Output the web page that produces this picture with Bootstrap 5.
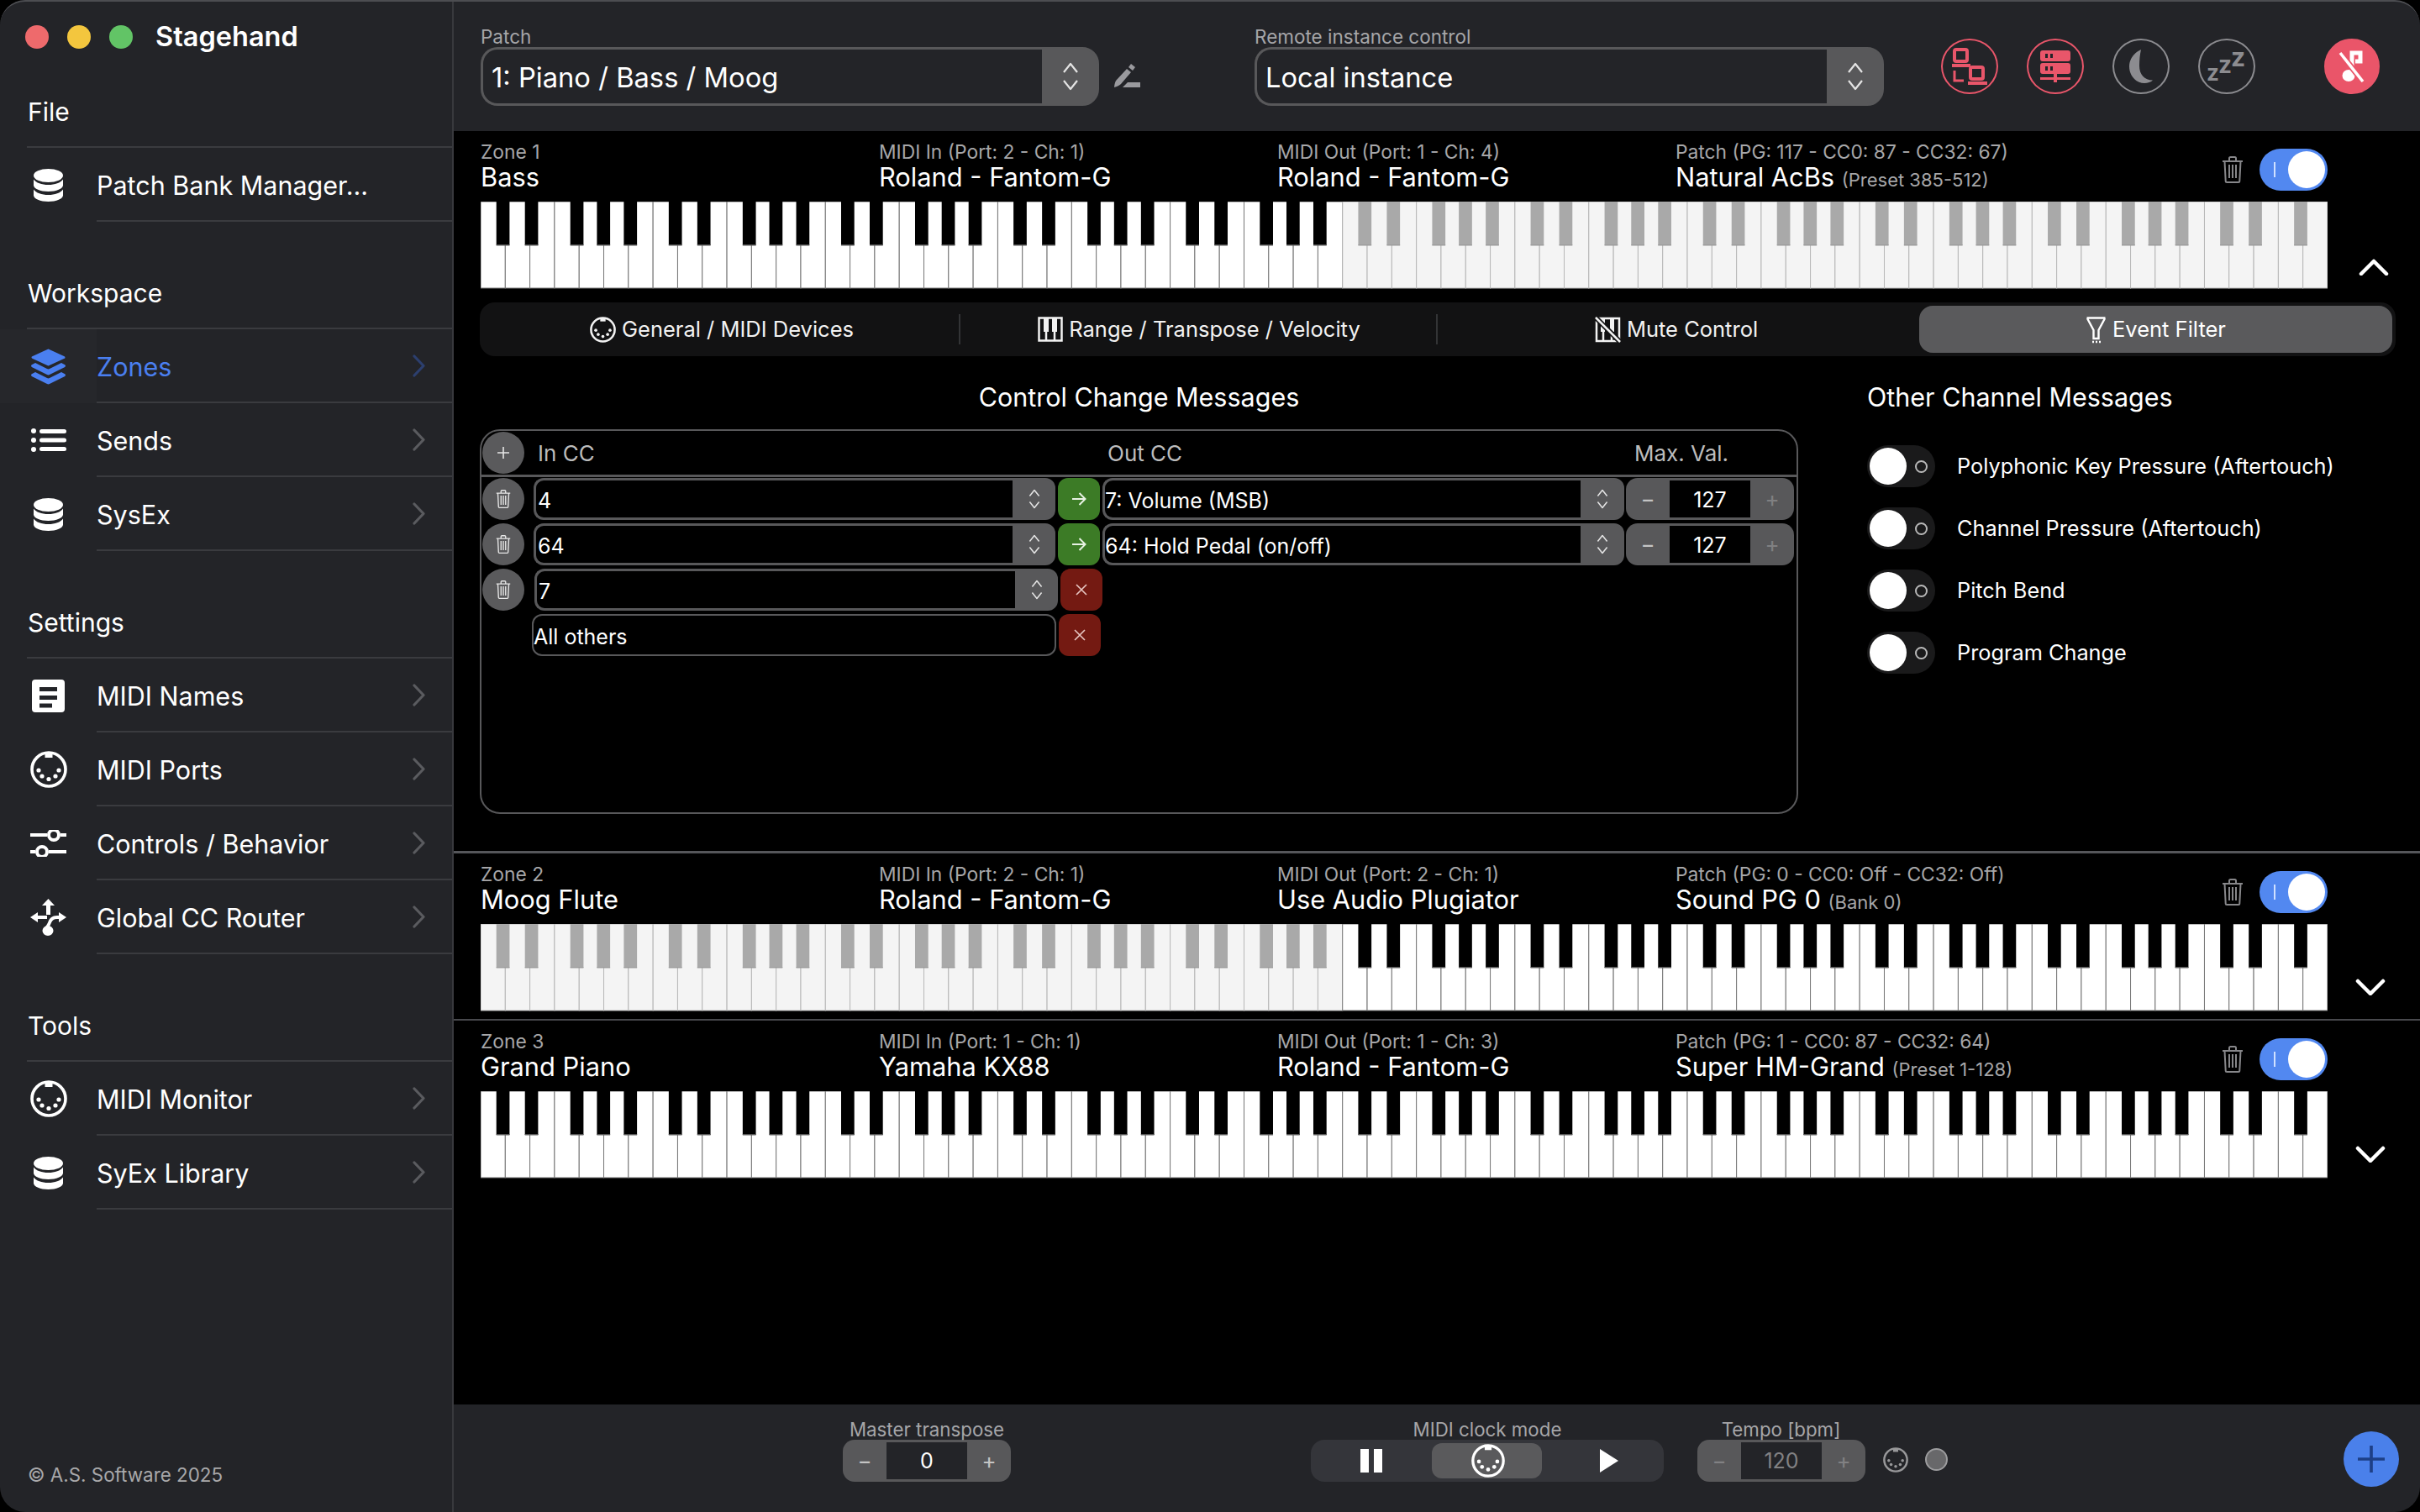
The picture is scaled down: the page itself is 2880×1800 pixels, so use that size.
<!DOCTYPE html>
<html lang="en">
<head>
  <meta charset="UTF-8" />
  <meta name="viewport" content="width=device-width, initial-scale=1" />
  <title>Stagehand</title>
  <link href="https://cdn.jsdelivr.net/npm/bootstrap@5.3.0/dist/css/bootstrap.min.css" rel="stylesheet" />
  <style>
    html, body { background: #000; height: 100%; }
    body { font-family: "Inter", "Liberation Sans", sans-serif; color: #fff; overflow: hidden; }
    svg { display: block; flex-shrink: 0; }

    .app-win { position: relative; width: 2880px; height: 1800px; border-radius: 30px; overflow: hidden; background: #000; }
    .app-win::after { content: ""; position: absolute; inset: 0; border-top: 2px solid #4c4d51; border-radius: 30px; pointer-events: none; }

    /* sidebar */
    .side { width: 540px; background: #232428; border-right: 2px solid #38393d; flex-shrink: 0; }
    .side-title { height: 88px; padding-left: 30px; gap: 22px; }
    .light { width: 28px; height: 28px; border-radius: 50%; }
    .app-name { font-size: 32.5px; font-weight: 600; margin-left: 5px; }
    .sec-head { height: 88px; margin-left: 32px; padding-left: 1px; padding-top: 4px; font-size: 30px; border-bottom: 2px solid #3a3b3f; }
    .sec-gap { margin-top: 40px; }
    .side-list { --bs-list-group-bg: transparent; --bs-list-group-border-width: 0; --bs-list-group-color: #fff; --bs-list-group-item-padding-x: 0; --bs-list-group-item-padding-y: 0; border-radius: 0; }
    .side-row { height: 88px; font-size: 30.5px; }
    .side-row.on { background: #26272b; color: #4a7ff0; }
    .side-ico { width: 115px; }
    .side-inner { height: 88px; border-bottom: 2px solid #3a3b3f; padding: 3px 32px 0 0; }
    .side-row.on .side-inner { background: #232428; }
    .chev-r { color: #5a5b5f; margin-top: -3px; }
    .side-row.on .chev-r { color: #2c3f6e; }
    .side-foot { font-size: 22.4px; color: #a8a8aa; padding: 0 0 27px 33px; }

    /* top bar */
    .top-bar { height: 156px; background: #232428; padding: 32px 0 0 32px; flex-shrink: 0; }
    .fld-label { font-size: 22.5px; line-height: 24px; color: #a6a6a8; }
    .pick-big { width: 736px; height: 70px; }
    .pick-big2 { width: 749px; height: 70px; }
    .pick .form-control { background: transparent; border: 3px solid #58585a; border-right: 0; color: #fff; box-shadow: none; display: flex; align-items: center; min-height: 0; }
    .pick .input-group-text { background: #58585a; border: 3px solid #58585a; color: #e4e4e4; justify-content: center; padding: 0; }
    .pick-big .form-control, .pick-big2 .form-control { font-size: 32.7px; padding: 3px 0 0 10px; border-radius: 20px 0 0 20px; }
    .pick-big .input-group-text, .pick-big2 .input-group-text { width: 68px; border-radius: 0 20px 20px 0; }
    .pen-btn { margin: 43px 0 0 17px; color: #9a9a9e; }
    .round-btn { width: 68px; height: 66px; border-radius: 50%; padding: 0; background: transparent; border: 2px solid #e9566a; color: #e9566a; }
    .round-btn.dim { border-color: #8c8c90; color: #8c8c90; }
    .round-btn.fill { width: 66px; background: #ea5569; color: #fff; }
    .zzz-txt { font-family: "Inter", sans-serif; font-weight: 700; fill: currentColor; }
    .zzz-ico { margin-top: -6px; }

    /* zones */
    .zone-line { border-top: 3px solid #55565a; margin-top: 44px; }
    .zone-thin { border-top: 2px solid #48494d; margin-top: 9px; }
    .zone-head { height: 84px; padding-left: 32px; }
    .zone-col { width: 474px; padding-top: 12px; }
    .zone-lab { font-size: 22.8px; line-height: 26px; color: #a6a6a8; }
    .zone-name { font-size: 30.8px; line-height: 34px; color: #fff; white-space: nowrap; }
    .zone-name small { font-size: 22px; color: #a6a6a8; }
    .zone-tools { position: absolute; left: 2104px; top: 21px; gap: 19px; }
    .zone-bar { position: relative; }
    .trash-ico { color: #87878a; }
    .tog { width: 81px; height: 50px; border-radius: 25px; padding: 0 3px; }
    .tog-on { background: #5288f0; justify-content: space-between; padding-left: 17px; }
    .tog-off { background: #1a1a1b; }
    .tog-knob { width: 44px; height: 44px; background: #fff; border-radius: 50%; }
    .tog-i { width: 2px; height: 18px; background: #cfe0ff; }
    .tog-o { width: 15px; height: 15px; border: 2px solid #b8b8b8; border-radius: 50%; margin-left: 10px; }
    .kbd-wrap { padding-left: 32px; }
    .kbd-chev { width: 110px; padding: 0 0 16px 37px; }
    .kbd-chev.dn { padding: 0 0 19px 33px; }

    .tabs-bar { margin: 16px 0 0 31px; width: 2280px; height: 64px; background: #121213; border-radius: 18px; padding: 4px; flex-wrap: nowrap; --bs-nav-pills-border-radius: 16px; --bs-nav-pills-link-active-bg: #5a5a5c; --bs-nav-pills-link-active-color: #fff; }
    .tabs-bar .nav-item { position: relative; }
    .tabs-bar .nav-item + .nav-item:not(:last-child)::before { content: ""; position: absolute; left: -2px; top: 10px; height: 36px; width: 2px; background: #333436; }
    .tabs-bar .nav-link { height: 56px; color: #f2f2f2; font-size: 25.5px; padding: 0; gap: 7px; }
    .tabs-bar .nav-link.active { margin-left: 5px; width: calc(100% - 5px); padding-top: 1px; }

    .cc-title { font-size: 30.5px; line-height: 40px; margin: 29px 0 18px; }
    .panel-l { width: 1569px; margin-left: 31px; }
    .panel-r { margin-left: 82px; }
    .cc-box { height: 458px; border: 2px solid #58585a; border-radius: 24px; padding: 0 0 0 1px; }
    .cc-head { height: 55px; border-bottom: 3px solid #58585a; margin-left: -1px; padding-left: 1px; font-size: 26px; color: #bcbcbc; }
    .cc-rows { padding-top: 1px; gap: 4px; }
    .cc-row { height: 50px; font-size: 25px; }
    .dot-btn { width: 50px; height: 50px; border-radius: 50%; background: #5a5a5c; color: #e6e6e6; padding: 0; border: 0; }
    .cc-rows .pick { width: 621px; height: 50px; flex-wrap: nowrap; margin-left: 11px; }
    .cc-rows .pick .form-control { font-size: 25px; padding: 5px 0 0 2px; border-radius: 12px 0 0 12px; }
    .cc-rows .pick .input-group-text { width: 51px; border-radius: 0 12px 12px 0; }
    .cc-rows .pick.out { width: 621px; margin-left: 3px; }
    .cc-rows .pick.out .form-control { padding-left: 0; }
    .cc-rows .pick.wide { width: 623px; margin-left: 12px; }
    .cc-rows .pick.out .input-group-text { width: 52px; }
    .others { width: 624px; height: 50px; margin-left: 9px; border: 2px solid #58585a; border-radius: 12px; padding: 5px 0 0 0; }
    .sq-btn { width: 50px; height: 50px; padding: 0; border: 0; border-radius: 12px; margin-left: 3px; }
    .sq-go { background: #3c7b26; color: #e8f2e4; }
    .sq-stop { background: #741a12; color: #e8c8c4; }
    .stepper { width: 200px; height: 50px; background: #58585a; border-radius: 14px; padding: 3px 0; margin-left: 2px; flex-shrink: 0; }
    .step-b { width: 52px; text-align: center; color: #c4c4c4; line-height: 44px; font-size: 26px; }
    .step-b.dis { color: #808082; }
    .step-v { flex: 1; text-align: center; background: #000; color: #fff; line-height: 41px; padding-top: 3px; font-size: 25px; }
    .chan-row { height: 50px; margin-bottom: 24px; font-size: 25.3px; gap: 26px; }
    .chan-list { padding-top: 19px; }

    /* bottom bar */
    .bot-bar { height: 128px; background: #232428; padding: 18px 25px 0 463px; margin-top: auto; flex-shrink: 0; }
    .bot-lab { font-size: 22.3px; line-height: 24px; color: #a6a6a8; text-align: center; white-space: nowrap; }
    .bot-bar .stepper { margin-left: 0; }
    .bot-bar .step-v { background: #232428; line-height: 44px; padding-top: 0; }
    .bot-bar .dimmed .step-v, .bot-bar .dimmed .step-b { color: #818183; }
    .seg { width: 420px; height: 50px; background: #34353a; border-radius: 16px; padding: 4px 0; }
    .seg-cell { width: 144px; }
    .seg-cell.play { padding-left: 16px; }
    .seg-on { width: 131px; height: 42px; background: #5a5a5c; border-radius: 12px; color: #fff; padding-left: 2px; }
    .add-btn { width: 66px; height: 66px; background: #4a80ea; border: 0; border-radius: 50%; padding: 0; margin-top: 14px; color: #1d3f86; }
    .led { width: 27px; height: 27px; background: #68686a; border: 2px solid #9c9c9e; border-radius: 50%; margin-left: 20px; }
  </style>
</head>
<body>

<!-- shared icons -->
<svg width="0" height="0" class="position-absolute">
  <defs>
    <symbol id="i-db" viewBox="0 0 35 39">
      <ellipse cx="17.5" cy="8" rx="17.5" ry="8" fill="currentColor"/>
      <path fill="currentColor" d="M0 12.5v7c0 4.200 8 7.500 17.500 7.500S35 23.700 35 19.500v-7c-3 4.200-9.500 6.500-17.500 6.500S3 16.700 0 12.500z"/>
      <path fill="currentColor" d="M0 24.500v7c0 4.200 8 7.500 17.500 7.500S35 35.700 35 31.500v-7c-3 4.200-9.500 6.500-17.500 6.500S3 28.700 0 24.500z"/>
    </symbol>
    <symbol id="i-layers" viewBox="0 0 41 43">
      <path fill="currentColor" stroke="currentColor" stroke-width="3" stroke-linejoin="round" d="M20.500 2 39 10.500 20.500 19 2 10.500z"/>
      <path fill="currentColor" d="M5 17 .8 19.200c-1 .6-1 2.200 0 2.800L19 31c1 .5 2 .5 3 0l18.200-9c1-.6 1-2.200 0-2.800L36 17l-14 7c-1 .5-2 .5-3 0z"/>
      <path fill="currentColor" d="M5 28 .8 30.200c-1 .6-1 2.200 0 2.800L19 42c1 .5 2 .5 3 0l18.200-9c1-.6 1-2.200 0-2.800L36 28l-14 7c-1 .5-2 .5-3 0z"/>
    </symbol>
    <symbol id="i-list" viewBox="0 0 42 28">
      <circle cx="3" cy="3" r="3" fill="currentColor"/><circle cx="3" cy="14" r="3" fill="currentColor"/><circle cx="3" cy="25" r="3" fill="currentColor"/>
      <rect x="10" y="1" width="32" height="5" rx="2.500" fill="currentColor"/><rect x="10" y="11.500" width="32" height="5" rx="2.500" fill="currentColor"/><rect x="10" y="22" width="32" height="5" rx="2.500" fill="currentColor"/>
    </symbol>
    <symbol id="i-doc" viewBox="0 0 39 39">
      <path fill="currentColor" fill-rule="evenodd" d="M4 0h31a4 4 0 0 1 4 4v31a4 4 0 0 1-4 4H4a4 4 0 0 1-4-4V4a4 4 0 0 1 4-4zM9 9v5h21V9zm0 10v5h21v-5zm0 9.500v5h15v-5z"/>
    </symbol>
    <symbol id="i-midi" viewBox="0 0 44 44">
      <circle cx="22" cy="22" r="20" fill="none" stroke="currentColor" stroke-width="3.600"/>
      <rect x="17.500" y="2" width="9" height="6" fill="currentColor"/>
      <circle cx="10" cy="23" r="2.600" fill="currentColor"/><circle cx="14" cy="30" r="2.600" fill="currentColor"/><circle cx="22" cy="33.500" r="2.600" fill="currentColor"/><circle cx="30" cy="30" r="2.600" fill="currentColor"/><circle cx="34" cy="23" r="2.600" fill="currentColor"/>
    </symbol>
    <symbol id="i-sliders" viewBox="0 0 43 32">
      <path d="M0 6h20M36 6h7M0 26h6M22 26h21" stroke="currentColor" stroke-width="4" fill="none"/>
      <circle cx="28" cy="6" r="6" fill="none" stroke="currentColor" stroke-width="4"/>
      <circle cx="14" cy="26" r="6" fill="none" stroke="currentColor" stroke-width="4"/>
    </symbol>
    <symbol id="i-route" viewBox="0 0 43 44">
      <path fill="currentColor" d="M21.500 0 29 8h-5v11h-5V8h-5zM0 22l9-6v4h11v4H9v4zM43 22l-9-6v4h-2c-6 0-9 3-10.500 7-1 2.400-2 4.500-3.500 6l4 2c1-1.800 2-4 3-6.400 1-2.800 3-4.600 7-4.600h2v4z"/>
      <ellipse cx="21" cy="38" rx="6.500" ry="6" fill="currentColor"/>
    </symbol>
    <symbol id="i-chev" viewBox="0 0 15 27">
      <path d="M2 2l11 11.500L2 25" fill="none" stroke="currentColor" stroke-width="3.200" stroke-linecap="round" stroke-linejoin="round"/>
    </symbol>
    <symbol id="i-updown" viewBox="0 0 20 34">
      <path d="M2 12l8-10 8 10M2 22l8 10 8-10" fill="none" stroke="currentColor" stroke-width="2.200" stroke-linejoin="round"/>
    </symbol>
    <symbol id="i-trash" viewBox="0 0 26 32">
      <path fill="none" stroke="currentColor" stroke-width="2" d="M9 5V2.500c0-.8.600-1.500 1.500-1.500h5c.9 0 1.500.7 1.500 1.500V5M1 6h24M3.500 6l1.200 23.500c0 .9.800 1.500 1.500 1.500h13.600c.8 0 1.500-.6 1.500-1.500L22.500 6M9 10v16M13 10v16M17 10v16"/>
    </symbol>
    <symbol id="i-arrow" viewBox="0 0 20 20">
      <path d="M2 10h15M10.500 3l7 7-7 7" fill="none" stroke="currentColor" stroke-width="2"/>
    </symbol>
    <symbol id="i-x" viewBox="0 0 14 14">
      <path d="M1 1l12 12M13 1 1 13" fill="none" stroke="currentColor" stroke-width="1.600"/>
    </symbol>
    <symbol id="i-plus" viewBox="0 0 14 14">
      <path d="M7 0v14M0 7h14" fill="none" stroke="currentColor" stroke-width="1.600"/>
    </symbol>
  </defs>
</svg>

<div class="app-win d-flex">

  <aside class="side d-flex flex-column">
    <div class="side-title d-flex align-items-center">
      <span class="light" style="background:#ee6a6c"></span>
      <span class="light" style="background:#f3c63e"></span>
      <span class="light" style="background:#62c466"></span>
      <span class="app-name">Stagehand</span>
    </div>

    <div class="sec-head d-flex align-items-center">File</div>
    <div class="list-group list-group-flush side-list">
      <div class="list-group-item side-row d-flex">
        <span class="side-ico d-flex align-items-center justify-content-center"><svg width="35" height="39"><use href="#i-db"/></svg></span>
        <span class="side-inner flex-grow-1 d-flex align-items-center">Patch Bank Manager...</span>
      </div>
    </div>

    <div class="sec-head sec-gap d-flex align-items-center">Workspace</div>
    <div class="list-group list-group-flush side-list">
      <div class="list-group-item side-row on d-flex">
        <span class="side-ico d-flex align-items-center justify-content-center"><svg width="41" height="43"><use href="#i-layers"/></svg></span>
        <span class="side-inner flex-grow-1 d-flex align-items-center justify-content-between">Zones <svg class="chev-r" width="15" height="27"><use href="#i-chev"/></svg></span>
      </div>
      <div class="list-group-item side-row d-flex">
        <span class="side-ico d-flex align-items-center justify-content-center"><svg width="42" height="28"><use href="#i-list"/></svg></span>
        <span class="side-inner flex-grow-1 d-flex align-items-center justify-content-between">Sends <svg class="chev-r" width="15" height="27"><use href="#i-chev"/></svg></span>
      </div>
      <div class="list-group-item side-row d-flex">
        <span class="side-ico d-flex align-items-center justify-content-center"><svg width="35" height="39"><use href="#i-db"/></svg></span>
        <span class="side-inner flex-grow-1 d-flex align-items-center justify-content-between">SysEx <svg class="chev-r" width="15" height="27"><use href="#i-chev"/></svg></span>
      </div>
    </div>

    <div class="sec-head sec-gap d-flex align-items-center">Settings</div>
    <div class="list-group list-group-flush side-list">
      <div class="list-group-item side-row d-flex">
        <span class="side-ico d-flex align-items-center justify-content-center"><svg width="39" height="39"><use href="#i-doc"/></svg></span>
        <span class="side-inner flex-grow-1 d-flex align-items-center justify-content-between">MIDI Names <svg class="chev-r" width="15" height="27"><use href="#i-chev"/></svg></span>
      </div>
      <div class="list-group-item side-row d-flex">
        <span class="side-ico d-flex align-items-center justify-content-center"><svg width="44" height="44"><use href="#i-midi"/></svg></span>
        <span class="side-inner flex-grow-1 d-flex align-items-center justify-content-between">MIDI Ports <svg class="chev-r" width="15" height="27"><use href="#i-chev"/></svg></span>
      </div>
      <div class="list-group-item side-row d-flex">
        <span class="side-ico d-flex align-items-center justify-content-center"><svg width="43" height="32"><use href="#i-sliders"/></svg></span>
        <span class="side-inner flex-grow-1 d-flex align-items-center justify-content-between">Controls / Behavior <svg class="chev-r" width="15" height="27"><use href="#i-chev"/></svg></span>
      </div>
      <div class="list-group-item side-row d-flex">
        <span class="side-ico d-flex align-items-center justify-content-center"><svg width="43" height="44"><use href="#i-route"/></svg></span>
        <span class="side-inner flex-grow-1 d-flex align-items-center justify-content-between">Global CC Router <svg class="chev-r" width="15" height="27"><use href="#i-chev"/></svg></span>
      </div>
    </div>

    <div class="sec-head sec-gap d-flex align-items-center">Tools</div>
    <div class="list-group list-group-flush side-list">
      <div class="list-group-item side-row d-flex">
        <span class="side-ico d-flex align-items-center justify-content-center"><svg width="44" height="44"><use href="#i-midi"/></svg></span>
        <span class="side-inner flex-grow-1 d-flex align-items-center justify-content-between">MIDI Monitor <svg class="chev-r" width="15" height="27"><use href="#i-chev"/></svg></span>
      </div>
      <div class="list-group-item side-row d-flex">
        <span class="side-ico d-flex align-items-center justify-content-center"><svg width="35" height="39"><use href="#i-db"/></svg></span>
        <span class="side-inner flex-grow-1 d-flex align-items-center justify-content-between">SyEx Library <svg class="chev-r" width="15" height="27"><use href="#i-chev"/></svg></span>
      </div>
    </div>

    <div class="side-foot mt-auto">© A.S. Software 2025</div>
  </aside>

  <main class="flex-grow-1 d-flex flex-column">

    <div class="top-bar d-flex">
      <div>
        <div class="fld-label">Patch</div>
        <div class="input-group pick pick-big">
          <div class="form-control">1: Piano / Bass / Moog</div>
          <span class="input-group-text"><svg width="20" height="34"><use href="#i-updown"/></svg></span>
        </div>
      </div>
      <svg class="pen-btn" width="32" height="29" viewBox="0 0 32 29">
        <path fill="currentColor" d="M21 1l5 4-3 4-5-4zM16 7l5 4L9 25c-1 1.500-5 3-8 4 .3-3 1-7 2.500-8.500zM5 22l3 2.500L4 26zM17 23l15 0v6H11z"/>
      </svg>
      <div style="margin-left:136px">
        <div class="fld-label">Remote instance control</div>
        <div class="input-group pick pick-big2">
          <div class="form-control">Local instance</div>
          <span class="input-group-text"><svg width="20" height="34"><use href="#i-updown"/></svg></span>
        </div>
      </div>
      <div class="d-flex align-items-start" style="gap:34px;margin:14px 0 0 68px">
        <button class="btn round-btn d-flex align-items-center justify-content-center">
          <svg width="42" height="44" viewBox="0 0 42 44" fill="none" stroke="currentColor">
            <rect x="3" y="2" width="15" height="14" rx="2" stroke-width="4"/><rect x="0" y="19" width="22" height="4" fill="currentColor" stroke="none"/>
            <path d="M3 27v12h11" stroke-width="3"/>
            <rect x="22" y="23" width="15" height="14" rx="2" stroke-width="4"/><rect x="19" y="40" width="23" height="4" fill="currentColor" stroke="none"/>
          </svg>
        </button>
        <button class="btn round-btn d-flex align-items-center justify-content-center">
          <svg width="36" height="38" viewBox="0 0 36 38">
            <path fill="currentColor" fill-rule="evenodd" d="M3 0h30a3 3 0 0 1 3 3v7a3 3 0 0 1-3 3H3a3 3 0 0 1-3-3V3a3 3 0 0 1 3-3zm3 4v5h3V4zm6 0v5h3V4zM3 15h30a3 3 0 0 1 3 3v7a3 3 0 0 1-3 3H20v4h16v3H20v3h-4v-3H0v-3h16v-4H3a3 3 0 0 1-3-3v-7a3 3 0 0 1 3-3zm3 4v5h3v-5zm6 0v5h3v-5z"/>
          </svg>
        </button>
        <button class="btn round-btn dim d-flex align-items-center justify-content-center">
          <svg width="30" height="42" viewBox="0 0 30 42"><path fill="currentColor" d="M15 1C6 5 1 13 1 21c0 12 9 20 18 20 4 0 8-1.500 10-3.500-10 0-16-7-16-17 0-7 .6-13 2-19.500z"/></svg>
        </button>
        <button class="btn round-btn dim d-flex align-items-center justify-content-center">
          <svg class="zzz-ico" width="48" height="56" viewBox="0 0 48 56">
            <text class="zzz-txt" x="0" y="48" font-size="26">z</text>
            <text class="zzz-txt" x="14" y="39" font-size="28">z</text>
            <text class="zzz-txt" x="29" y="31" font-size="30">z</text>
          </svg>
        </button>
        <button class="btn round-btn fill d-flex align-items-center justify-content-center" style="margin-left:48px">
          <svg width="34" height="38" viewBox="0 0 34 38">
            <ellipse cx="13" cy="30" rx="7.500" ry="7" fill="currentColor"/>
            <path d="M17 30V3h10v10h-6" fill="none" stroke="currentColor" stroke-width="5"/>
            <path d="M3 3l27 34" stroke="#ea5569" stroke-width="7"/>
            <path d="M3 3l27 34" stroke="currentColor" stroke-width="3.500"/>
          </svg>
        </button>
      </div>
    </div>

    <!-- zone 1 -->
    <section>
      <div class="zone-bar">
        <div class="zone-head d-flex">
          <div class="zone-col"><div class="zone-lab">Zone 1</div><div class="zone-name">Bass</div></div>
          <div class="zone-col"><div class="zone-lab">MIDI In (Port: 2 - Ch: 1)</div><div class="zone-name">Roland - Fantom-G</div></div>
          <div class="zone-col"><div class="zone-lab">MIDI Out (Port: 1 - Ch: 4)</div><div class="zone-name">Roland - Fantom-G</div></div>
          <div class="zone-col"><div class="zone-lab">Patch (PG: 117 - CC0: 87 - CC32: 67)</div><div class="zone-name">Natural AcBs <small>(Preset 385-512)</small></div></div>
        </div>
        <div class="zone-tools d-flex align-items-center">
          <svg class="trash-ico" width="26" height="32"><use href="#i-trash"/></svg>
          <span class="tog tog-on d-flex align-items-center"><span class="tog-i"></span><span class="tog-knob"></span></span>
        </div>
      </div>
      <div class="kbd-wrap d-flex">
        <svg class="kbd" data-lo="0" data-hi="35" width="2198" height="104"></svg>
        <div class="kbd-chev align-self-end"><svg width="36" height="20" viewBox="0 0 36 20"><path d="M3 18 18 3l15 15" fill="none" stroke="#fff" stroke-width="4.500" stroke-linecap="round" stroke-linejoin="round"/></svg></div>
      </div>

      <ul class="nav nav-pills nav-justified tabs-bar">
        <li class="nav-item"><a class="nav-link d-flex align-items-center justify-content-center"><svg width="31" height="31"><use href="#i-midi"/></svg>General / MIDI Devices</a></li>
        <li class="nav-item"><a class="nav-link d-flex align-items-center justify-content-center">
          <svg width="30" height="30" viewBox="0 0 30 30"><path fill="none" stroke="currentColor" stroke-width="2.500" d="M1.500 1.500h27v27h-27zM10 28V18M20 28V18"/><path fill="currentColor" d="M7 2h6v16H7zM17 2h6v16h-6z"/></svg>Range / Transpose / Velocity</a></li>
        <li class="nav-item"><a class="nav-link d-flex align-items-center justify-content-center">
          <svg width="31" height="31" viewBox="0 0 31 31"><path fill="none" stroke="currentColor" stroke-width="2.500" d="M2 2h27v27H2zM10 28V18M20 28V18"/><path fill="currentColor" d="M7 3h5v15H7zM18 3h5v15h-5z"/><path d="M1 1l29 29" stroke="#121213" stroke-width="6"/><path d="M1 1l29 29" stroke="currentColor" stroke-width="2.500"/></svg>Mute Control</a></li>
        <li class="nav-item"><a class="nav-link active d-flex align-items-center justify-content-center">
          <svg width="25" height="32" viewBox="0 0 25 32"><path fill="none" stroke="currentColor" stroke-width="2.400" d="M1.500 1.500h22M2 2l7.500 14v10h6V16L23 2"/><path d="M8 30h2M12 30h2M16 30h2" stroke="currentColor" stroke-width="2.500"/></svg>Event Filter</a></li>
      </ul>

      <div class="d-flex">
        <div class="panel-l">
          <div class="cc-title text-center">Control Change Messages</div>
          <div class="cc-box">
            <div class="cc-head d-flex align-items-center">
              <button class="btn dot-btn d-flex align-items-center justify-content-center"><svg width="14" height="14"><use href="#i-plus"/></svg></button>
              <span style="margin-left:16px;width:678px">In CC</span>
              <span style="width:627px">Out CC</span>
              <span>Max. Val.</span>
            </div>
            <div class="cc-rows d-flex flex-column">
              <div class="cc-row d-flex">
                <button class="btn dot-btn d-flex align-items-center justify-content-center"><svg width="18" height="22"><use href="#i-trash"/></svg></button>
                <div class="input-group pick"><div class="form-control">4</div><span class="input-group-text"><svg width="14" height="24"><use href="#i-updown"/></svg></span></div>
                <button class="btn sq-btn sq-go d-flex align-items-center justify-content-center"><svg width="20" height="20"><use href="#i-arrow"/></svg></button>
                <div class="input-group pick out"><div class="form-control">7: Volume (MSB)</div><span class="input-group-text"><svg width="14" height="24"><use href="#i-updown"/></svg></span></div>
                <div class="stepper d-flex"><span class="step-b">−</span><span class="step-v">127</span><span class="step-b dis">+</span></div>
              </div>
              <div class="cc-row d-flex">
                <button class="btn dot-btn d-flex align-items-center justify-content-center"><svg width="18" height="22"><use href="#i-trash"/></svg></button>
                <div class="input-group pick"><div class="form-control">64</div><span class="input-group-text"><svg width="14" height="24"><use href="#i-updown"/></svg></span></div>
                <button class="btn sq-btn sq-go d-flex align-items-center justify-content-center"><svg width="20" height="20"><use href="#i-arrow"/></svg></button>
                <div class="input-group pick out"><div class="form-control">64: Hold Pedal (on/off)</div><span class="input-group-text"><svg width="14" height="24"><use href="#i-updown"/></svg></span></div>
                <div class="stepper d-flex"><span class="step-b">−</span><span class="step-v">127</span><span class="step-b dis">+</span></div>
              </div>
              <div class="cc-row d-flex">
                <button class="btn dot-btn d-flex align-items-center justify-content-center"><svg width="18" height="22"><use href="#i-trash"/></svg></button>
                <div class="input-group pick wide"><div class="form-control">7</div><span class="input-group-text"><svg width="14" height="24"><use href="#i-updown"/></svg></span></div>
                <button class="btn sq-btn sq-stop d-flex align-items-center justify-content-center"><svg width="14" height="14"><use href="#i-x"/></svg></button>
              </div>
              <div class="cc-row d-flex">
                <span style="width:50px"></span>
                <div class="others d-flex align-items-center">All others</div>
                <button class="btn sq-btn sq-stop d-flex align-items-center justify-content-center"><svg width="14" height="14"><use href="#i-x"/></svg></button>
              </div>
            </div>
          </div>
        </div>
        <div class="panel-r">
          <div class="cc-title">Other Channel Messages</div>
          <div class="chan-list">
            <div class="chan-row d-flex align-items-center"><span class="tog tog-off d-flex align-items-center"><span class="tog-knob"></span><span class="tog-o"></span></span>Polyphonic Key Pressure (Aftertouch)</div>
            <div class="chan-row d-flex align-items-center"><span class="tog tog-off d-flex align-items-center"><span class="tog-knob"></span><span class="tog-o"></span></span>Channel Pressure (Aftertouch)</div>
            <div class="chan-row d-flex align-items-center"><span class="tog tog-off d-flex align-items-center"><span class="tog-knob"></span><span class="tog-o"></span></span>Pitch Bend</div>
            <div class="chan-row d-flex align-items-center"><span class="tog tog-off d-flex align-items-center"><span class="tog-knob"></span><span class="tog-o"></span></span>Program Change</div>
          </div>
        </div>
      </div>
    </section>

    <!-- zone 2 -->
    <section class="zone-line">
      <div class="zone-bar">
        <div class="zone-head d-flex">
          <div class="zone-col"><div class="zone-lab">Zone 2</div><div class="zone-name">Moog Flute</div></div>
          <div class="zone-col"><div class="zone-lab">MIDI In (Port: 2 - Ch: 1)</div><div class="zone-name">Roland - Fantom-G</div></div>
          <div class="zone-col"><div class="zone-lab">MIDI Out (Port: 2 - Ch: 1)</div><div class="zone-name">Use Audio Plugiator</div></div>
          <div class="zone-col"><div class="zone-lab">Patch (PG: 0 - CC0: Off - CC32: Off)</div><div class="zone-name">Sound PG 0 <small>(Bank 0)</small></div></div>
        </div>
        <div class="zone-tools d-flex align-items-center">
          <svg class="trash-ico" width="26" height="32"><use href="#i-trash"/></svg>
          <span class="tog tog-on d-flex align-items-center"><span class="tog-i"></span><span class="tog-knob"></span></span>
        </div>
      </div>
      <div class="kbd-wrap d-flex">
        <svg class="kbd" data-lo="35" data-hi="75" width="2198" height="104"></svg>
        <div class="kbd-chev dn align-self-end"><svg width="36" height="20" viewBox="0 0 36 20"><path d="M3 3l15 15L33 3" fill="none" stroke="#fff" stroke-width="4.500" stroke-linecap="round" stroke-linejoin="round"/></svg></div>
      </div>
    </section>

    <!-- zone 3 -->
    <section class="zone-thin">
      <div class="zone-bar">
        <div class="zone-head d-flex">
          <div class="zone-col"><div class="zone-lab">Zone 3</div><div class="zone-name">Grand Piano</div></div>
          <div class="zone-col"><div class="zone-lab">MIDI In (Port: 1 - Ch: 1)</div><div class="zone-name">Yamaha KX88</div></div>
          <div class="zone-col"><div class="zone-lab">MIDI Out (Port: 1 - Ch: 3)</div><div class="zone-name">Roland - Fantom-G</div></div>
          <div class="zone-col"><div class="zone-lab">Patch (PG: 1 - CC0: 87 - CC32: 64)</div><div class="zone-name">Super HM-Grand <small>(Preset 1-128)</small></div></div>
        </div>
        <div class="zone-tools d-flex align-items-center">
          <svg class="trash-ico" width="26" height="32"><use href="#i-trash"/></svg>
          <span class="tog tog-on d-flex align-items-center"><span class="tog-i"></span><span class="tog-knob"></span></span>
        </div>
      </div>
      <div class="kbd-wrap d-flex">
        <svg class="kbd" data-lo="0" data-hi="75" width="2198" height="104"></svg>
        <div class="kbd-chev dn align-self-end"><svg width="36" height="20" viewBox="0 0 36 20"><path d="M3 3l15 15L33 3" fill="none" stroke="#fff" stroke-width="4.500" stroke-linecap="round" stroke-linejoin="round"/></svg></div>
      </div>
    </section>

    <div class="bot-bar d-flex align-items-start">
      <div style="width:200px">
        <div class="bot-lab">Master transpose</div>
        <div class="stepper d-flex"><span class="step-b">−</span><span class="step-v">0</span><span class="step-b">+</span></div>
      </div>
      <div style="margin-left:357px">
        <div class="bot-lab">MIDI clock mode</div>
        <div class="seg d-flex align-items-center">
          <span class="seg-cell d-flex justify-content-center"><svg width="26" height="28" viewBox="0 0 26 28"><path fill="#fff" d="M0 0h10v28H0zM16 0h10v28H16z"/></svg></span>
          <span class="seg-on d-flex align-items-center justify-content-center"><svg width="40" height="40"><use href="#i-midi"/></svg></span>
          <span class="seg-cell play d-flex justify-content-center"><svg width="22" height="28" viewBox="0 0 22 28"><path fill="#fff" d="M0 0l22 14L0 28z"/></svg></span>
        </div>
      </div>
      <div class="dimmed" style="width:199px;margin-left:40px">
        <div class="bot-lab">Tempo [bpm]</div>
        <div class="stepper d-flex"><span class="step-b">−</span><span class="step-v">120</span><span class="step-b">+</span></div>
      </div>
      <svg style="margin:33px 0 0 22px;color:#98989a" width="30" height="30"><use href="#i-midi"/></svg>
      <span class="led" style="margin-top:34px"></span>
      <button class="btn add-btn ms-auto d-flex align-items-center justify-content-center"><svg width="32" height="32"><use href="#i-plus"/></svg></button>
    </div>
  </main>
</div>

<script>
  // 128 note keyboard, 75 white keys, white key numbers lo..hi-1 are the zone's active range
  const KW = 2198 / 75;
  const BLACKS = [18.7, 52.7, 106.7, 138.4, 170.4];

  function drawKeys(svg) {
    const lo = +svg.dataset.lo, hi = +svg.dataset.hi;
    let out = "";
    for (let i = 0; i < 75; i++) {
      const on = i >= lo && i < hi;
      out += `<rect x="${(i * KW).toFixed(2)}" y="0" width="${KW.toFixed(2)}" height="103" fill="${on ? "#fff" : "#f4f4f4"}" stroke="${on ? "#777" : "#b8b8b8"}" stroke-width="1"/>`;
    }
    for (let oct = 0; oct < 11; oct++) {
      const start = oct * 7 * KW;
      BLACKS.forEach((off, n) => {
        if (oct === 10 && n > 2) return;
        const x = start + off;
        const on = x >= lo * KW && x < hi * KW;
        out += `<rect x="${x.toFixed(2)}" y="0" width="15.7" height="52" fill="${on ? "#000" : "#a9a9a9"}"/>`;
        out += `<rect x="${x.toFixed(2)}" y="51" width="15.7" height="1.5" fill="${on ? "#555" : "#9c9c9c"}"/>`;
      });
    }
    svg.setAttribute("viewBox", "0 0 2198 104");
    svg.innerHTML = out;
  }

  document.querySelectorAll(".kbd").forEach(drawKeys);
</script>

<script src="https://cdn.jsdelivr.net/npm/bootstrap@5.3.0/dist/js/bootstrap.bundle.min.js"></script>
</body>
</html>
